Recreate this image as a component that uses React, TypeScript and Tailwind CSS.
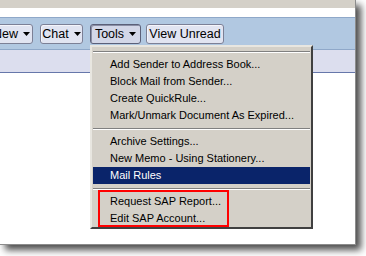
import React from "react";

const font = { fontFamily: '"Liberation Sans", Arial, sans-serif' };

function Arrow() {
  return (
    <svg width="7" height="4" viewBox="0 0 7 4" className="shrink-0">
      <polygon points="0,0 7,0 3.5,4" fill="#000" />
    </svg>
  );
}

function ToolButton({
  label,
  width,
  arrow = true,
  pressed = false,
  className = "",
}: {
  label: string;
  width: string;
  arrow?: boolean;
  pressed?: boolean;
  className?: string;
}) {
  return (
    <div
      className={`${width} ${className} h-[20px] shrink-0 flex items-center justify-center gap-[5px] rounded-[3px] border text-[12.5px] leading-none text-black ${
        pressed
          ? "border-[#5b6079] bg-[#d3d7e8] shadow-[inset_1px_1px_0_#8a8fa6]"
          : "border-[#7c8096] bg-[#e1e4f1] shadow-[inset_1px_1px_0_#f4f5fb]"
      }`}
    >
      <span>{label}</span>
      {arrow && <Arrow />}
    </div>
  );
}

function Separator() {
  return (
    <div className="h-[9px] flex flex-col justify-center">
      <div className="h-px bg-[#808080]" />
      <div className="h-px bg-white" />
    </div>
  );
}

function MenuItem({ label, active = false }: { label: string; active?: boolean }) {
  return (
    <div
      className={`h-[17px] flex items-center pl-[17px] text-[11px] whitespace-nowrap ${
        active ? "bg-[#0a246a] text-white" : "text-black"
      }`}
    >
      {label}
    </div>
  );
}

export default function App() {
  return (
    <div className="w-[366px] h-[256px] bg-white overflow-hidden" style={font}>
      <div className="relative w-[356px] h-[245px] bg-white border-r border-b border-[#8c8c8c] shadow-[5px_5px_7px_rgba(0,0,0,0.7)]">
        {/* window chrome */}
        <div className="h-[8px] bg-[#d4d0c8]" />
        <div className="h-[9px] bg-white" />
        <div className="h-[33px] bg-[#b1c8e1] border-t border-b border-[#8fa8c9] flex items-start pt-[6px] gap-[7px] overflow-hidden">
          <ToolButton label="New" width="w-[43px]" className="-ml-[10px]" />
          <ToolButton label="Chat" width="w-[43px]" />
          <ToolButton label="Tools" width="w-[51px]" pressed className="-mr-[2px]" />
          <ToolButton label="View Unread" width="w-[78px]" arrow={false} />
        </div>
        <div className="h-[23px] bg-[#dcdeee] border-b border-[#6677aa]" />

        {/* Tools dropdown */}
        <div className="absolute left-[90px] top-[45px] w-[223px] h-[184px] bg-[#d4d0c8] border-2 border-t-[#e8e6e0] border-l-[#e8e6e0] border-r-[#404040] border-b-[#404040] p-px">
          <div className="h-[8px] flex flex-col justify-center">
            <div className="h-px bg-[#808080]" />
            <div className="h-px bg-white" />
          </div>
          <MenuItem label="Add Sender to Address Book..." />
          <MenuItem label="Block Mail from Sender..." />
          <MenuItem label="Create QuickRule..." />
          <MenuItem label="Mark/Unmark Document As Expired..." />
          <Separator />
          <MenuItem label="Archive Settings..." />
          <MenuItem label="New Memo - Using Stationery..." />
          <MenuItem label="Mail Rules" active />
          <Separator />
          <MenuItem label="Request SAP Report..." />
          <MenuItem label="Edit SAP Account..." />
        </div>

        {/* annotation */}
        <div className="absolute left-[98px] top-[190px] w-[131px] h-[37px] border-2 border-[#ff0000]" />
      </div>
    </div>
  );
}
